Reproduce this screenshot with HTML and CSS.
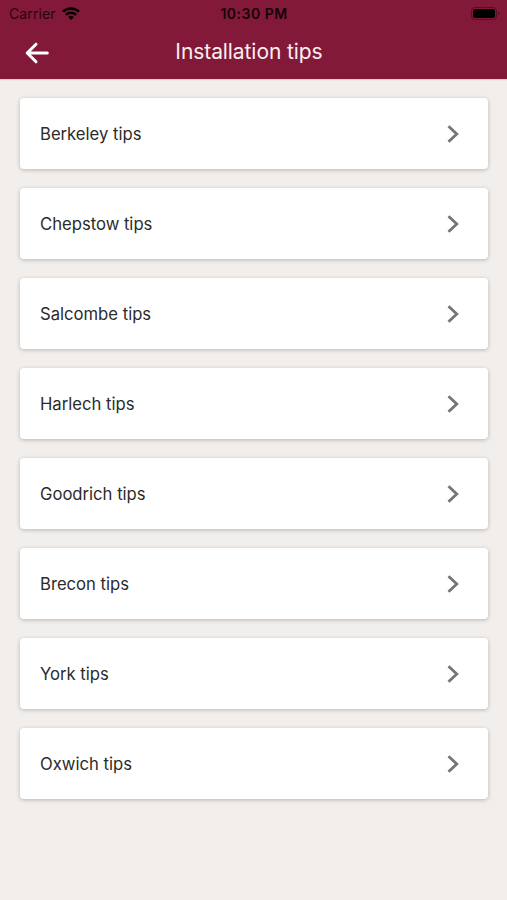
FILE: index.html
```html
<!DOCTYPE html>
<html lang="en">
<head>
<meta charset="utf-8">
<title>Installation tips</title>
<link rel="stylesheet" href="styles.css">
</head>
<body>
<header class="header">
  <div class="status">
    <div class="carrier"><span>Carrier</span>
      <svg class="wifi" width="18" height="13" viewBox="0 0 18 13"><g fill="none" stroke="#000" stroke-width="2.5"><path d="M1 4.7a11.3 11.3 0 0 1 16 0"/><path d="M3.9 7.9a7.2 7.2 0 0 1 10.2 0"/></g><path d="M9 13L6.2 10.1a4 4 0 0 1 5.6 0z"/></svg>
    </div>
    <div class="time">10:30 PM</div>
    <svg class="battery" width="29" height="13" viewBox="0 0 29 13"><rect x=".5" y=".5" width="25" height="12" rx="3.2" fill="none" stroke="#000" stroke-opacity=".35"/><rect x="2" y="2" width="22" height="9" rx="2"/><path d="M27 4.8q1.3.5 1.3 1.7T27 8.2z" fill-opacity=".4"/></svg>
  </div>
  <div class="bar">
    <svg class="back" width="24" height="22" viewBox="0 0 24 22"><path d="M22.3 11H2.3M11 2.2L2.2 11l8.8 8.8" fill="none" stroke="#fff" stroke-width="3" stroke-linecap="round" stroke-linejoin="round"/></svg>
    <h1 class="title">Installation tips</h1>
  </div>
</header>
<main class="list">
  <a class="card"><span>Berkeley tips</span><svg class="chevron" viewBox="0 0 12 18"><path d="M1.5 1.2L9.8 9l-8.3 7.8"/></svg></a>
  <a class="card"><span>Chepstow tips</span><svg class="chevron" viewBox="0 0 12 18"><path d="M1.5 1.2L9.8 9l-8.3 7.8"/></svg></a>
  <a class="card"><span>Salcombe tips</span><svg class="chevron" viewBox="0 0 12 18"><path d="M1.5 1.2L9.8 9l-8.3 7.8"/></svg></a>
  <a class="card"><span>Harlech tips</span><svg class="chevron" viewBox="0 0 12 18"><path d="M1.5 1.2L9.8 9l-8.3 7.8"/></svg></a>
  <a class="card"><span>Goodrich tips</span><svg class="chevron" viewBox="0 0 12 18"><path d="M1.5 1.2L9.8 9l-8.3 7.8"/></svg></a>
  <a class="card"><span>Brecon tips</span><svg class="chevron" viewBox="0 0 12 18"><path d="M1.5 1.2L9.8 9l-8.3 7.8"/></svg></a>
  <a class="card"><span>York tips</span><svg class="chevron" viewBox="0 0 12 18"><path d="M1.5 1.2L9.8 9l-8.3 7.8"/></svg></a>
  <a class="card"><span>Oxwich tips</span><svg class="chevron" viewBox="0 0 12 18"><path d="M1.5 1.2L9.8 9l-8.3 7.8"/></svg></a>
</main>
</body>
</html>
```
FILE: styles.css
```css
* { box-sizing: border-box; }
body { margin: 0; min-height: 900px; background: #f2eeeb; font-family: Inter, "Liberation Sans", sans-serif; color: #2b2b2b; }
.header { height: 79px; background: #821938; box-shadow: 0 1px 1px rgba(0,0,0,.12); }
.status { height: 27px; display: grid; grid-template-columns: 1fr auto 1fr; align-items: center; padding: 0 7px 0 9px; color: #000; font-size: 14px; }
.carrier { display: flex; align-items: center; gap: 6px; color: #26060f; letter-spacing: .1px; }
.time { font-weight: 600; letter-spacing: .5px; margin-right: 1px; color: #140308; }
.battery { justify-self: end; }
.bar { height: 52px; display: grid; grid-template-columns: 55px 1fr 64px; align-items: center; }
.back { margin-left: 25px; }
.title { margin: 0; padding-bottom: 2px; color: #fbeef1; font-size: 21px; font-weight: 400; text-align: center; line-height: 26px; letter-spacing: -.08px; }
.list { padding: 19px 19px 0 20px; display: flex; flex-direction: column; gap: 19px; }
.card { height: 71px; display: flex; align-items: center; justify-content: space-between; padding: 0 29px 0 20px; background: #fff; border-radius: 4px; box-shadow: 0 1px 4px rgba(0,0,0,.24); font-size: 16.65px; }
.chevron { width: 12px; height: 18px; fill: none; stroke: #757575; stroke-width: 2.8; }
```
